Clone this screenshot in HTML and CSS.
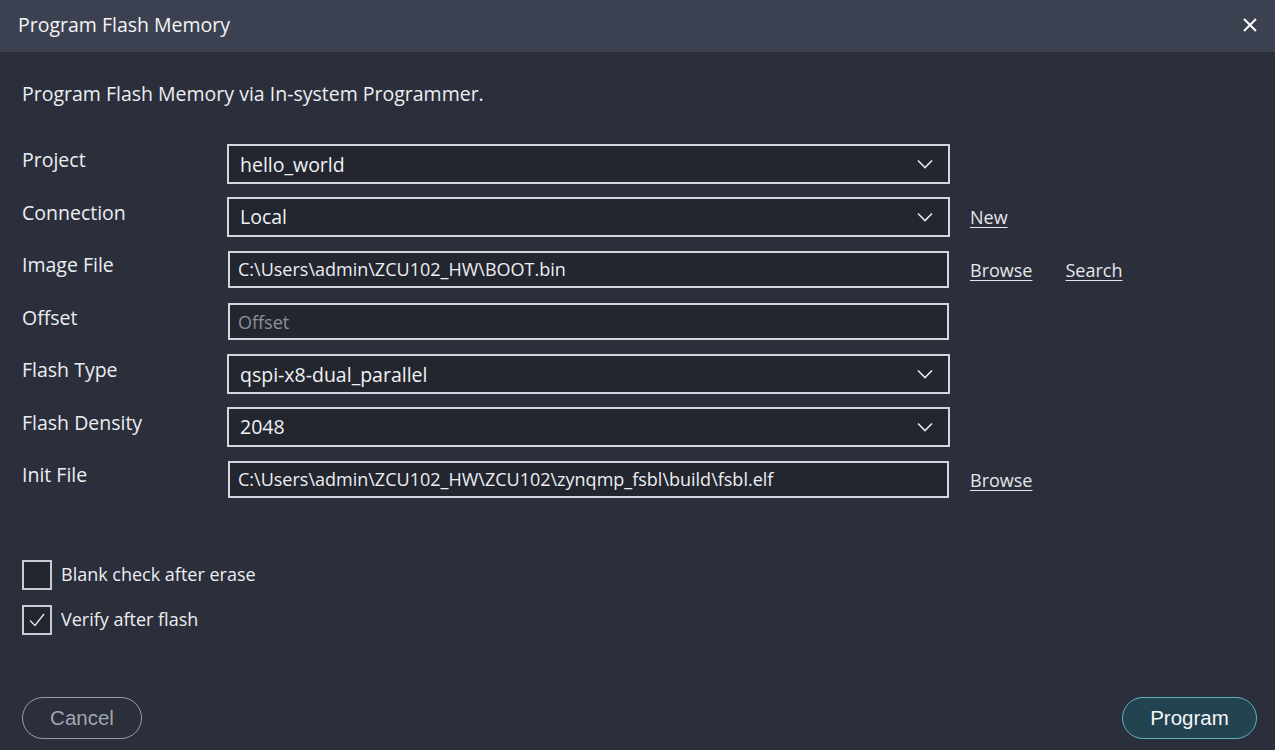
FILE: index.html
```html
<!DOCTYPE html>
<html>
<head>
<meta charset="utf-8">
<link rel="stylesheet" href="styles.css">
</head>
<body>
<div class="dialog">
  <div class="header">
    <span class="title">Program Flash Memory</span>
    <svg class="close" width="16" height="16" viewBox="0 0 16 16"><path d="M2 2 L14 14 M14 2 L2 14" stroke="#ffffff" stroke-width="2" fill="none"/></svg>
  </div>
  <div class="content">
    <p class="intro">Program Flash Memory via In-system Programmer.</p>
    <div class="form">
      <div class="label">Project</div>
      <div class="select"><span>hello_world</span><svg class="chev" width="16" height="10" viewBox="0 0 16 10"><path d="M1 1.5 L8 8.5 L15 1.5" stroke="#e6e8ec" stroke-width="1.6" fill="none"/></svg></div>
      <div class="links"></div>

      <div class="label">Connection</div>
      <div class="select"><span>Local</span><svg class="chev" width="16" height="10" viewBox="0 0 16 10"><path d="M1 1.5 L8 8.5 L15 1.5" stroke="#e6e8ec" stroke-width="1.6" fill="none"/></svg></div>
      <div class="links"><a class="link">New</a></div>

      <div class="label">Image File</div>
      <div class="input">C:\Users\admin\ZCU102_HW\BOOT.bin</div>
      <div class="links"><a class="link">Browse</a><a class="link">Search</a></div>

      <div class="label">Offset</div>
      <div class="input placeholder">Offset</div>
      <div class="links"></div>

      <div class="label">Flash Type</div>
      <div class="select"><span>qspi-x8-dual_parallel</span><svg class="chev" width="16" height="10" viewBox="0 0 16 10"><path d="M1 1.5 L8 8.5 L15 1.5" stroke="#e6e8ec" stroke-width="1.6" fill="none"/></svg></div>
      <div class="links"></div>

      <div class="label">Flash Density</div>
      <div class="select"><span>2048</span><svg class="chev" width="16" height="10" viewBox="0 0 16 10"><path d="M1 1.5 L8 8.5 L15 1.5" stroke="#e6e8ec" stroke-width="1.6" fill="none"/></svg></div>
      <div class="links"></div>

      <div class="label">Init File</div>
      <div class="input">C:\Users\admin\ZCU102_HW\ZCU102\zynqmp_fsbl\build\fsbl.elf</div>
      <div class="links"><a class="link">Browse</a></div>
    </div>

    <div class="checks">
      <div class="check"><span class="box"></span><span class="check-label">Blank check after erase</span></div>
      <div class="check"><span class="box"><svg width="20" height="20" viewBox="0 0 20 20"><path d="M3 10.5 L8 15.5 L17 4" stroke="#e6e8ec" stroke-width="1.3" fill="none"/></svg></span><span class="check-label">Verify after flash</span></div>
    </div>
  </div>
  <div class="footer">
    <button class="btn cancel">Cancel</button>
    <button class="btn primary">Program</button>
  </div>
</div>
</body>
</html>
```
FILE: styles.css
```css
* { box-sizing: border-box; }
html, body { margin: 0; padding: 0; }
body {
  width: 1275px;
  height: 750px;
  background: #2b2e3b;
  font-family: "Open Sans", "Noto Sans", sans-serif;
  color: #eceef1;
  overflow: hidden;
}
.dialog {
  height: 750px;
  display: flex;
  flex-direction: column;
}
.header {
  height: 52px;
  flex: none;
  background: #3c4152;
  display: flex;
  align-items: center;
  justify-content: space-between;
  padding: 0 17px 0 18px;
}
.title {
  font-size: 19.5px;
  color: #f3f4f6;
  margin-top: -3px;
}
.close { display: block; margin-top: -2px; }
.content {
  flex: 1;
  padding: 0 22px;
}
.intro {
  margin: 28px 0 0 0;
  font-size: 19.5px;
  line-height: 28px;
  color: #eceef1;
}
.form {
  margin-top: 30px;
  display: grid;
  grid-template-columns: 205px 723px auto;
  grid-auto-rows: 52.5px;
  align-items: center;
}
.label {
  font-size: 19.5px;
  align-self: start;
  padding-top: 7px;
  line-height: 30px;
  color: #eceef1;
}
.select {
  height: 40px;
  border: 2px solid #d3d6dc;
  background: #23262f;
  display: flex;
  align-items: center;
  justify-content: space-between;
  padding: 0 15px 0 11px;
  font-size: 19.5px;
  color: #f1f2f4;
}
.chev { display: block; }
.input {
  height: 37px;
  margin: 0 1px;
  border: 2px solid #d3d6dc;
  background: #23262f;
  display: flex;
  align-items: center;
  padding: 0 8px;
  font-size: 18px;
  color: #eceef1;
}
.input.placeholder { color: #8c9099; }
.links {
  display: flex;
  gap: 33px;
  padding-left: 20px;
}
.link {
  font-size: 18px;
  color: #e4e6ea;
  text-decoration: underline;
  text-underline-offset: 3px;
  margin-top: 1px;
}
.checks {
  margin-top: 54px;
  display: flex;
  flex-direction: column;
  gap: 15px;
}
.check {
  display: flex;
  align-items: center;
  gap: 9px;
}
.box {
  width: 30px;
  height: 30px;
  border: 2px solid #c9ccd2;
  background: #23262f;
  display: flex;
  align-items: center;
  justify-content: center;
}
.box svg { display: block; }
.check-label {
  font-size: 18px;
  color: #eceef1;
  margin-top: -1px;
}
.footer {
  flex: none;
  display: flex;
  justify-content: space-between;
  padding: 0 18px 11px 22px;
}
.btn {
  height: 42px;
  border-radius: 21px;
  font-family: "Liberation Sans", Arial, sans-serif;
  font-size: 20.5px;
  padding: 0;
}
.cancel {
  width: 120px;
  background: transparent;
  border: 1px solid #9a9ca4;
  color: #a3a6ad;
}
.primary {
  width: 135px;
  background: #22434f;
  border: 1px solid #5fb2be;
  color: #f4f6f8;
}
```
